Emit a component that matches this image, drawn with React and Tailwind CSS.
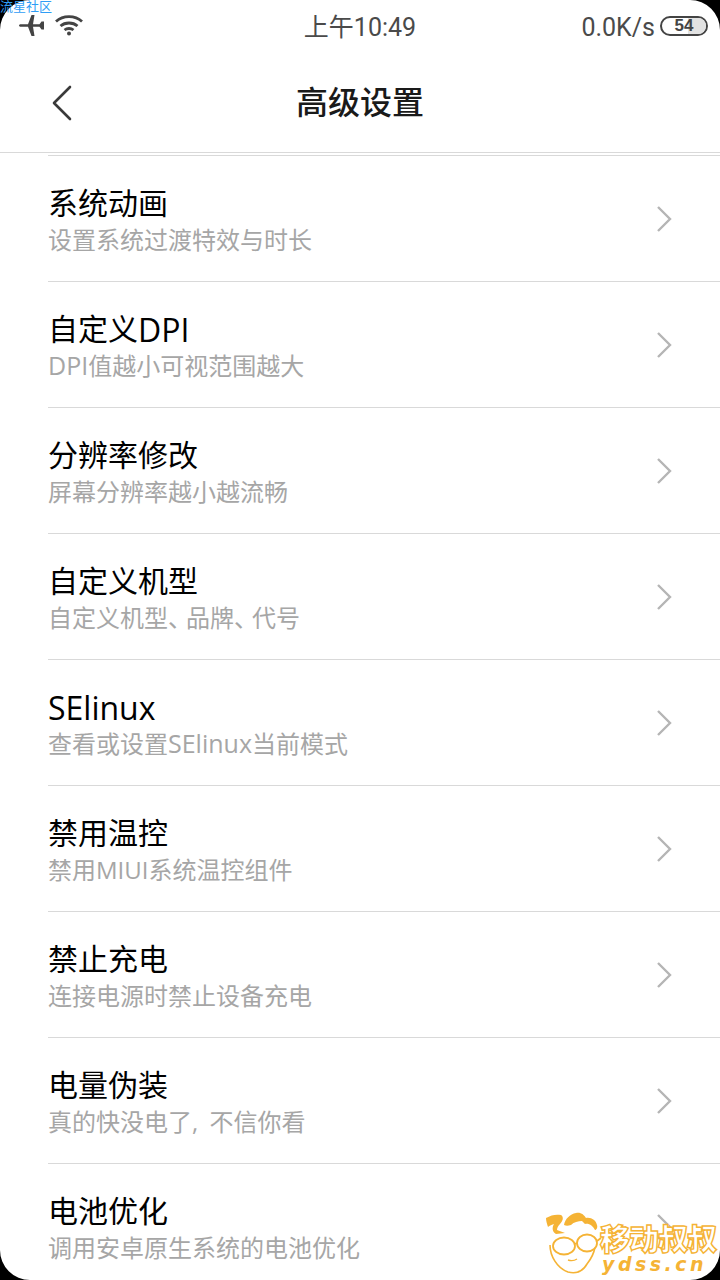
import React from "react";

const cjk = "font-['Roboto','Noto_Sans_CJK_SC',sans-serif]";
const dun = <span className="tracking-[-6px]">、</span>;
const Big = ({ children }) => <span className="text-[32px] leading-none align-[-2px]">{children}</span>;
const Lat = ({ children }) => <span className="text-[25px] leading-none">{children}</span>;

const rows = [
  ["a", "系统动画", "设置系统过渡特效与时长"],
  ["b", <>自定义<Big>DPI</Big></>, <><Lat>DPI</Lat>值越小可视范围越大</>],
  ["c", "分辨率修改", "屏幕分辨率越小越流畅"],
  ["d", "自定义机型", <>自定义机型{dun}品牌{dun}代号</>],
  ["e", <Big>SElinux</Big>, <>查看或设置<Lat>SElinux</Lat>当前模式</>],
  ["f", "禁用温控", "禁用MIUI系统温控组件"],
  ["g", "禁止充电", "连接电源时禁止设备充电"],
  ["h", "电量伪装", <span className="[word-spacing:5px]">真的快没电了, 不信你看</span>],
  ["i", "电池优化", "调用安卓原生系统的电池优化"],
];

const Row = ({ title, sub }) => (
  <div className="ml-12 h-[126px] border-t border-[#d9d9d9] flex items-center justify-between pr-[47px]">
    <div className="flex flex-col pt-[1px] font-['Open_Sans','Noto_Sans_CJK_SC',sans-serif]">
      <div className="text-[30px] h-[40px] leading-[40px] text-black">{title}</div>
      <div className="text-[24px] h-[32px] leading-[32px] mt-[1px] text-[#a6a6a6]">{sub}</div>
    </div>
    <svg width="18" height="28" viewBox="0 0 18 28" fill="none" stroke="#b5b5b5" strokeWidth="2.4">
      <path d="M3 2l12 12L3 26" />
    </svg>
  </div>
);

const Corner = ({ className }) => (
  <svg className={className} width="30" height="30" viewBox="0 0 30 30">
    <path d="M0 0h30A30 30 0 0 0 0 30z" fill="#000" />
  </svg>
);

const Watermark = () => (
  <div className="absolute left-[544px] top-[1210px] w-[176px] h-[70px]">
    <svg className="absolute left-0 top-0" width="66" height="68" viewBox="0 0 66 68" fill="none">
      <path d="M2 8c5-3 10-4 15-3 3 2 2 6-1 9-2 2-3 4-3 6l8 3-9 1c-4-2-4-7-2-10-3 1-5 2-6 3-1-3-2-6-2-9z" fill="#f5b335" />
      <path d="M20 15c1-6 6-11 12-12 5-1 8 2 10 5 5-1 10 2 11 7 1 3-1 5-2 5-2-4-6-7-10-6l-3-3c-4 0-8 1-11 4-3 1-5 1-7 0z" fill="#f5b335" />
      <path d="M6 35c0 11 7 23 18 27 8 2 15-1 19-8 4-5 7-11 8-17" stroke="#f5b335" strokeWidth="1.6" />
      <ellipse cx="20" cy="36" rx="11" ry="8.500" stroke="#f5b335" strokeWidth="1.8" fill="#fff" />
      <ellipse cx="43" cy="33" rx="10" ry="8.500" stroke="#f5b335" strokeWidth="1.8" fill="#fff" />
      <path d="M31 34l2-1M53 31l4-3" stroke="#f5b335" strokeWidth="1.8" />
      <path d="M24 50c3 1 6 1 9-1" stroke="#f5b335" strokeWidth="1.4" />
    </svg>
    <div className="absolute left-[56px] top-[13px] text-[30px] leading-[33px] font-black whitespace-nowrap text-white tracking-[-1px] [-webkit-text-stroke:1.4px_#f5b335]">移动叔叔</div>
    <div className="absolute left-[58px] top-[47px] font-['DejaVu_Sans',sans-serif] text-[19px] leading-[15px] font-bold italic text-[#f5b335] tracking-[3.5px] whitespace-nowrap">ydss.cn</div>
  </div>
);

const App = () => {
  return (
    <div className={`relative w-[720px] h-[1280px] overflow-hidden bg-white ${cjk}`}>
      {/* status bar */}
      <div className="h-[52px] relative flex items-center justify-between pl-[19px] pr-[12px] text-[#4a4a4a]">
        <div className="flex items-center gap-[9px] mb-[3px]">
          <svg width="26" height="22" viewBox="0 0 26 22" fill="#444">
            <path d="M0 11.500c0-.8 1-1.300 2-1.300h7L12.500 1h3l-1.500 9.200h6.500L22.500 7.500H25v8h-2.500l-2-2.700H14L15.500 22h-3L9 12.800H2c-1 0-2-.5-2-1.300z" />
          </svg>
          <svg width="30" height="22" viewBox="0 0 30 22" fill="none" stroke="#444" strokeWidth="2.800">
            <path d="M2 7.500c7-6.500 19-6.500 26 0" />
            <path d="M6.500 12c4.500-4 12.500-4 17 0" />
            <path d="M10.500 16c2.500-2 6.500-2 9 0" />
            <circle cx="15" cy="19.500" r="2" fill="#444" stroke="none" />
          </svg>
        </div>
        <div className="absolute left-0 right-0 top-[9px] text-center text-[25px] leading-[38px]">上午10:49</div>
        <div className="flex items-center gap-[6px] mb-[1px]">
          <span className="text-[25px] leading-[38px] mt-[4px] mr-[-1px]">0.0K/s</span>
          <div className="relative w-[48px] h-[20px] rounded-full border-2 border-[#444] overflow-hidden flex items-center justify-center">
            <div className="absolute left-[26px] right-0 top-0 bottom-0 bg-[#e2e2e2]" />
            <span className="relative text-[17px] leading-[18px] font-bold font-['Liberation_Sans',sans-serif] text-[#444]">54</span>
          </div>
        </div>
      </div>

      {/* title bar */}
      <div className="h-[101px] pt-[2px] relative flex items-center justify-center border-b border-[#d9d9d9]">
        <svg className="absolute left-[52px] top-[33px]" width="20" height="36" viewBox="0 0 20 36" fill="none" stroke="#3a3a3a" strokeWidth="2.600" strokeLinecap="round" strokeLinejoin="round">
          <path d="M18 2L2 18l16 16" />
        </svg>
        <div className="text-[32px] leading-[44px] font-medium text-[#1a1a1a]">高级设置</div>
      </div>

      {/* list */}
      <div className="mt-[2px]">
        {rows.map(([id, title, sub]) => (
          <Row key={id} title={title} sub={sub} />
        ))}
      </div>

      <Corner className="absolute left-0 top-0" />
      <Corner className="absolute right-0 top-0 rotate-90" />
      <Corner className="absolute right-0 bottom-0 rotate-180" />
      <Corner className="absolute left-0 bottom-0 -rotate-90" />

      <div className="absolute left-0 top-0 text-[13px] leading-[14px] text-[#2f9df5]">流星社区</div>
      <Watermark />
    </div>
  );
};

export default App;
